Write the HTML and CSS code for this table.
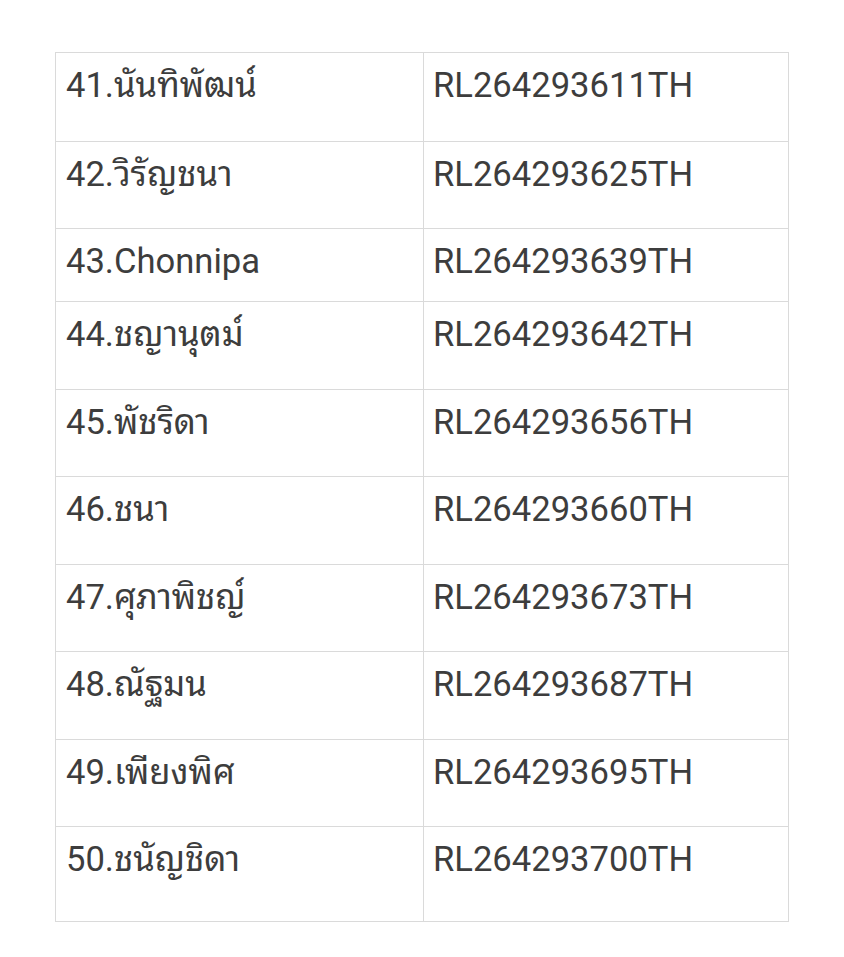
FILE: index.html
```html
<!DOCTYPE html>
<html lang="th">
<head>
<meta charset="utf-8">
<link rel="stylesheet" href="styles.css">
</head>
<body>
<div class="table">
  <div class="row"><div class="cell">41.นันทิพัฒน์</div><div class="cell">RL264293611TH</div></div>
  <div class="row"><div class="cell">42.วิรัญชนา</div><div class="cell">RL264293625TH</div></div>
  <div class="row short"><div class="cell">43.Chonnipa</div><div class="cell">RL264293639TH</div></div>
  <div class="row"><div class="cell">44.ชญานุตม์</div><div class="cell">RL264293642TH</div></div>
  <div class="row"><div class="cell">45.พัชริดา</div><div class="cell">RL264293656TH</div></div>
  <div class="row"><div class="cell">46.ชนา</div><div class="cell">RL264293660TH</div></div>
  <div class="row"><div class="cell">47.ศุภาพิชญ์</div><div class="cell">RL264293673TH</div></div>
  <div class="row"><div class="cell">48.ณัฐมน</div><div class="cell">RL264293687TH</div></div>
  <div class="row"><div class="cell">49.เพียงพิศ</div><div class="cell">RL264293695TH</div></div>
  <div class="row last"><div class="cell">50.ชนัญชิดา</div><div class="cell">RL264293700TH</div></div>
</div>
</body>
</html>
```

FILE: styles.css
```css
html, body {
  margin: 0;
  padding: 0;
  background: #ffffff;
}
body {
  padding: 52px 0 0 55px;
  font-family: Roboto, "Thonburi", "Noto Sans Thai Looped", "Loma", "Garuda", "Noto Sans Thai", "Noto Sans", sans-serif;
  color: #3d3d3d;
}
.table {
  width: 734px;
  border: 1px solid #dadada;
  box-sizing: border-box;
}
.row {
  display: grid;
  grid-template-columns: 367px 1fr;
  height: 87.5px;
  border-top: 1px solid #dadada;
  box-sizing: border-box;
}
.row:first-child {
  border-top: none;
  height: 87.5px;
}
.row.short {
  height: 73px;
}
.row.last {
  height: 95px;
}
.cell {
  font-size: 34.6px;
  line-height: 44px;
  padding: 10px 0 0 10px;
  white-space: nowrap;
}
.cell + .cell {
  border-left: 1px solid #dadada;
  padding-left: 9px;
}
```
